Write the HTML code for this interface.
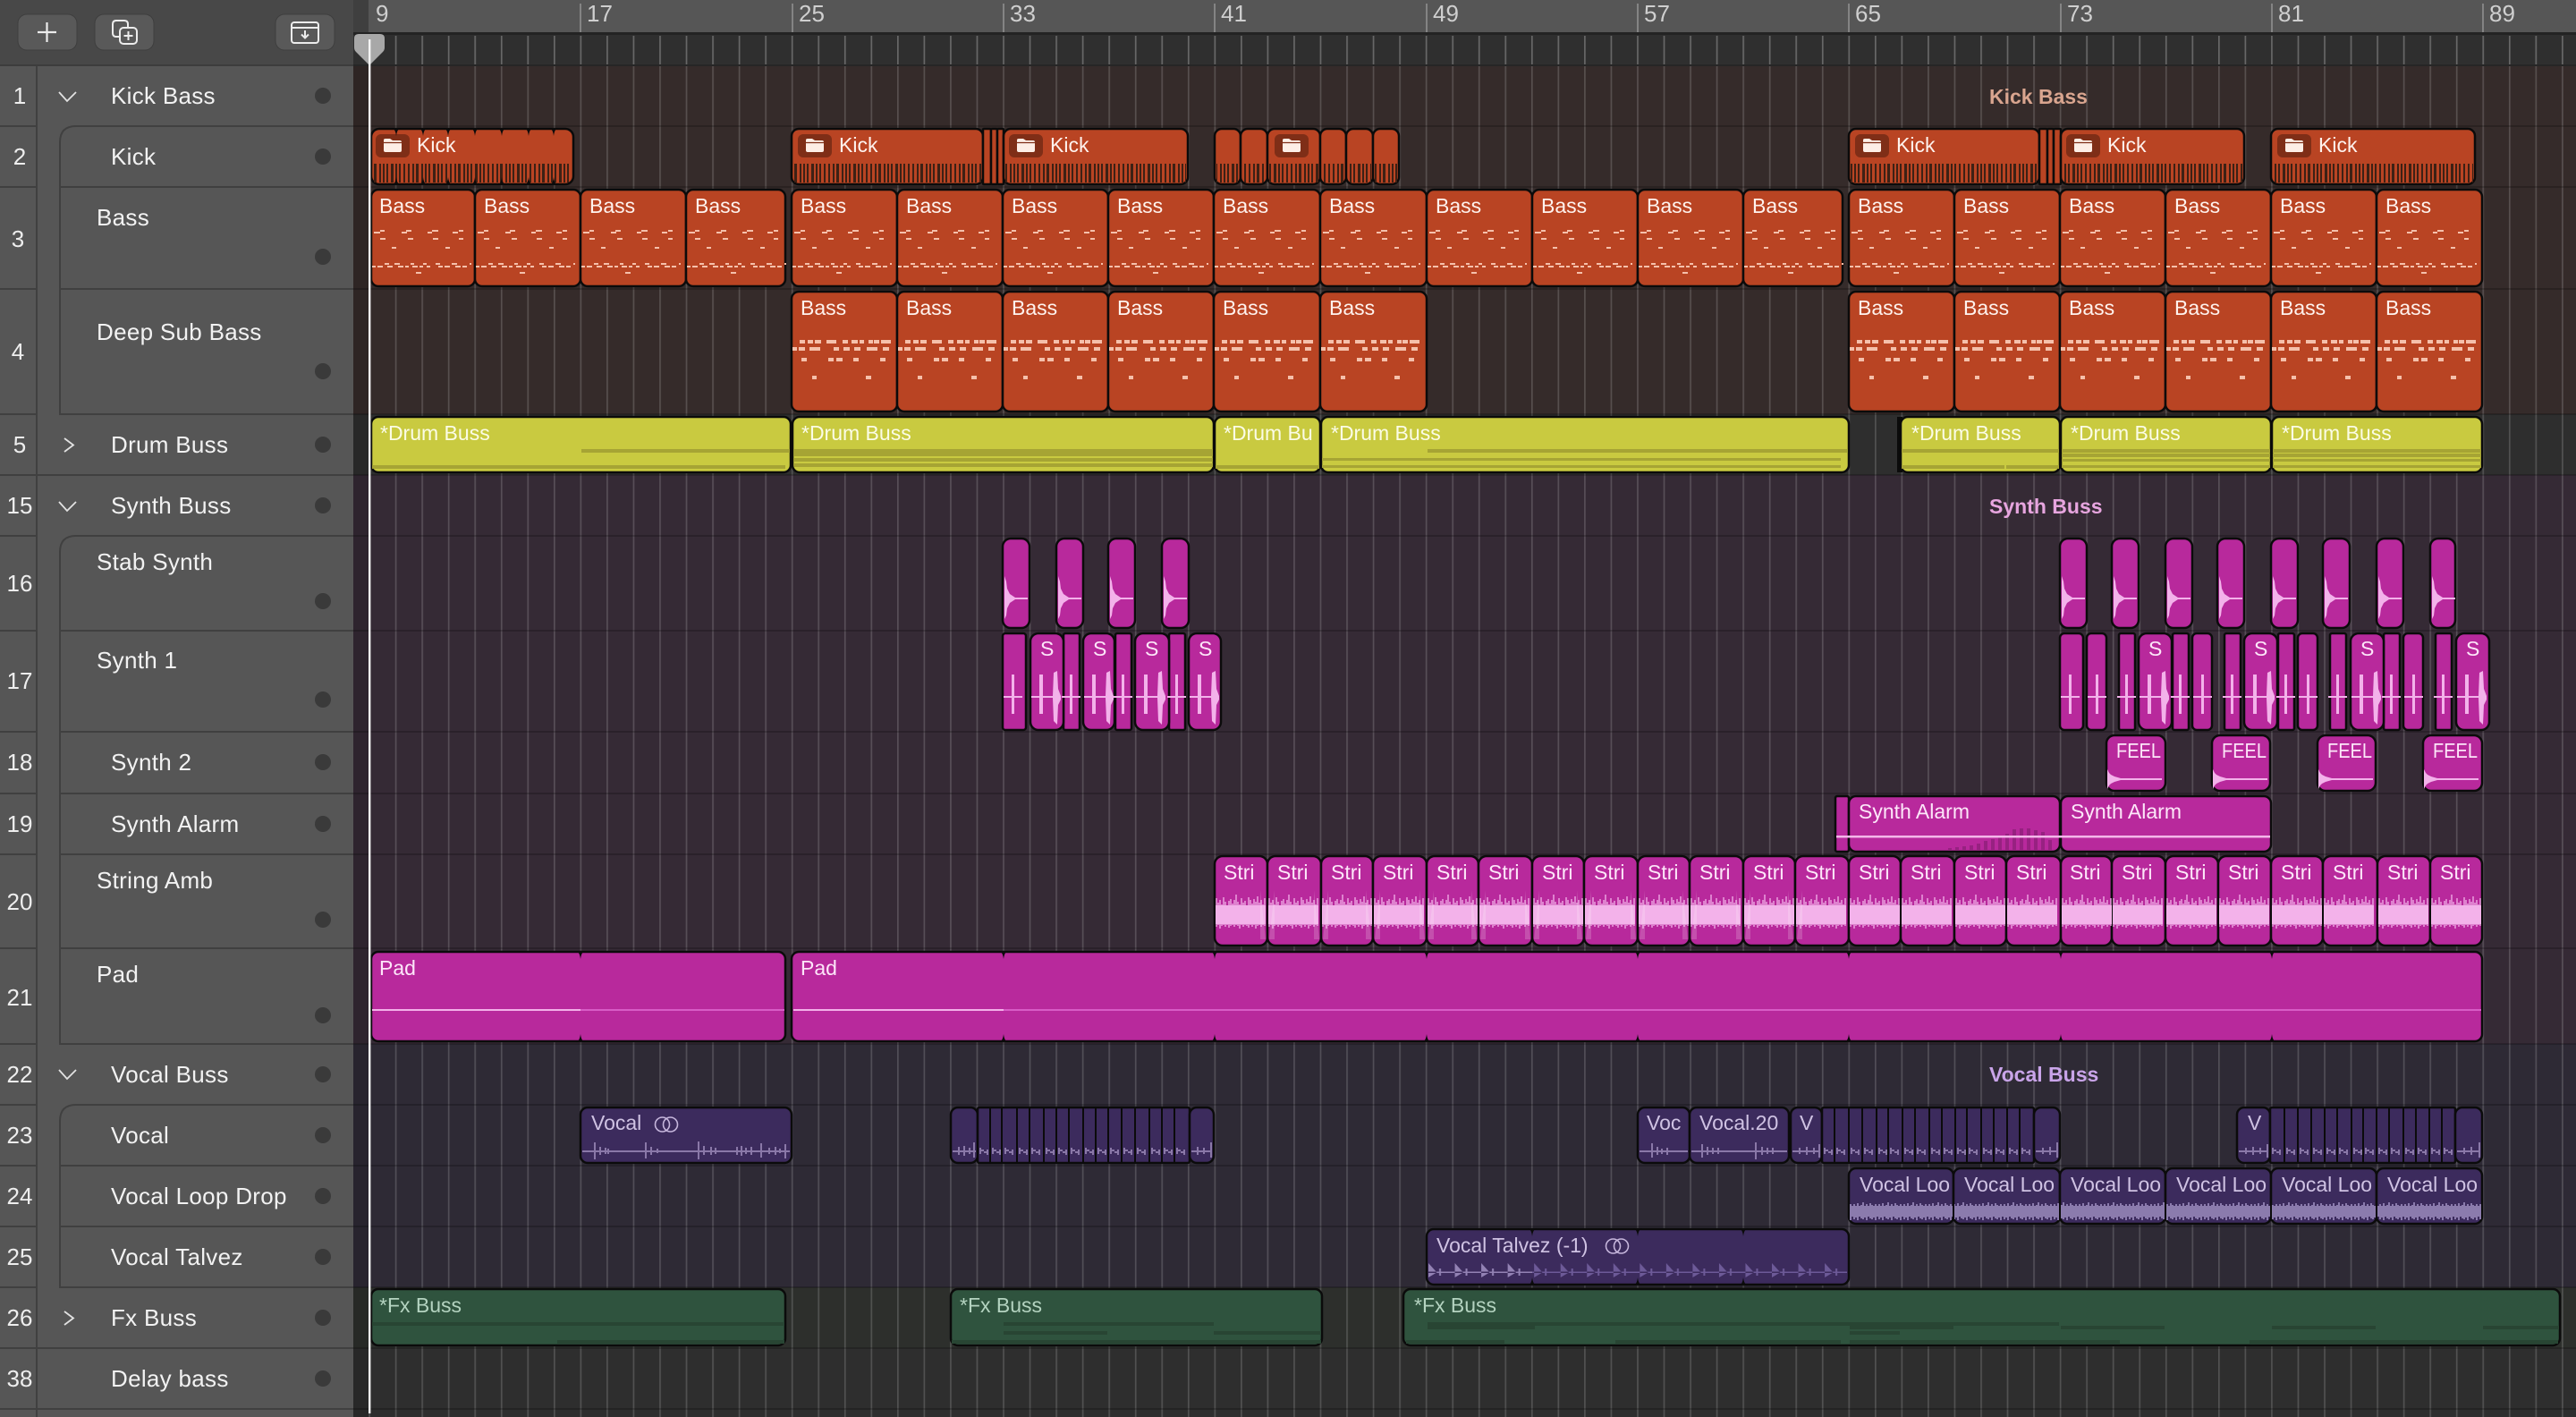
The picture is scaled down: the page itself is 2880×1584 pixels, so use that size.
<!DOCTYPE html>
<html lang="en">
<head>
<meta charset="utf-8">
<title>Arrangement</title>
<style>
html,body{margin:0;padding:0;background:#2e2e2e;width:2880px;height:1584px;overflow:hidden}
svg{display:block;position:absolute;left:0;top:0}
text{font-family:"Liberation Sans",sans-serif;white-space:pre}
.o,.y,.m,.p,.g{stroke:#0b0b0b;stroke-width:2.5}
.o{fill:#b94423}.y{fill:#c9ca40}.m{fill:#b8299c}.p{fill:#3c2b5d}.g{fill:#2f533e}
.to{fill:#fff3ee;font-size:23px}
.ty{fill:#fbfce6;font-size:23px}
.tm{fill:#fde6f9;font-size:23px}
.tp{fill:#cfc2e3;font-size:23px}
.tg{fill:#b4d3c0;font-size:23px}
.n{fill:#eeeeee;font-size:26px;text-anchor:middle}
.l{fill:#f2f2f2;font-size:26px;letter-spacing:.3px}
.r{fill:#cfcfcf;font-size:26px}
.gl{font-size:23px;font-weight:bold}
.d{fill:#3a3a3a}
.ds{fill:#a6a434}.fs{fill:#284533}
</style>
</head>
<body>
<svg width="2880" height="1584" viewBox="0 0 2880 1584" xmlns="http://www.w3.org/2000/svg">
<defs>
<pattern id="gl" patternUnits="userSpaceOnUse" x="412.2" y="0" width="29.54" height="40"><rect width="1.7" height="40" fill="#fff" fill-opacity=".17"/></pattern>
<pattern id="gb" patternUnits="userSpaceOnUse" x="412.2" y="0" width="29.54" height="40"><rect width="1.7" height="40" fill="#fff" fill-opacity=".27"/></pattern>
<pattern id="kp" patternUnits="userSpaceOnUse" x="0" y="183" width="47" height="21"><path fill="#3d2115" d="M1 0h2v21H1zM5 0h2v21H5zM9 0h2v21H9zM14 0h3v21h-3zM19 0h2v21h-2zM23 0h2v21h-2zM28 0h2v21h-2zM33 0h2v21h-2zM38 0h2v21h-2zM42 0h3v21h-3z"/></pattern>
<pattern id="vl" patternUnits="userSpaceOnUse" x="0" y="1340" width="28" height="30"><path stroke="#8b7bad" stroke-width="2" d="M1 6V23M3 8V21M5 5V24M7 9V20M9 7V22M11 4V23M13 8V21M15 6V24M17 9V20M19 5V22M21 7V23M23 8V21M25 6V24M27 9V20"/></pattern>
<pattern id="tb" patternUnits="userSpaceOnUse" x="1597" y="1405" width="29.54" height="30"><path fill="#9382b4" d="M0 7V23L10 17H12V13H14V21H12V18H10ZM0 16.500H29.540V18H0Z"/></pattern>
<pattern id="td" patternUnits="userSpaceOnUse" x="1597" y="1405" width="29.54" height="30"><path fill="#6d5a98" d="M0 7V23L10 17H12V13H14V21H12V18H10ZM0 16.500H29.540V18H0Z"/></pattern>
<path id="nt" d="M-5 -1Q-1 0 0 8Q1 0 5 -1Z" fill="#0b0b0b"/>
<path id="nb" d="M-5 1Q-1 0 0 -8Q1 0 5 1Z" fill="#0b0b0b"/>
<path id="bn" fill="none" stroke="#f5c0ab" stroke-width="2" d="M3 260H10M10 258H15M34 260H40M39 258H45M63 260H68M68 258H75M91 260H97M98 258H103M10 267H16M41 267H47M69 267H75M98 267H103M23 277H28M83 277H88M1 298H5M7 298H13M15 295H20M18 298H24M26 295H32M30 298H36M38 298H42M44 295H48M46 298H52M54 298H58M58 295H62M62 298H66M72 295H77M75 298H80M82 298H88M90 295H96M94 298H100M102 298H107M110 295H112M50 305H56"/>
<path id="sn" fill="none" stroke="#f5c0ab" stroke-width="4" d="M9 382H15M18 382H24M26 382H33M39 382H50M57 382H63M67 382H74M76 382H81M86 382H91M92 382H98M100 382H111M1 390H6M8 390H15M20 390H32M47 390H53M58 390H65M70 390H77M84 390H96M102 390H109M11 402H17M41 402H47M50 402H57M69 402H75M99 402H105M23 422H28M83 422H89"/>
<g id="st"><rect x="1" y="1012" width="56" height="21" fill="#f3b2ea"/><path fill="none" stroke="#f3b2ea" stroke-width="1.300" d="M2 1004V1036M4 1009V1034M6 1006V1038M8 1011V1035M10 1003V1034M12 1008V1036M14 1012V1034M16 1007V1037M18 1005V1035M20 1010V1034M22 1006V1036M24 1000V1034M26 1008V1035M28 1011V1038M30 1004V1034M32 1009V1036M34 1007V1034M36 1012V1035M38 1003V1037M40 1006V1034M42 1010V1036M44 1005V1034M46 1008V1038M48 1002V1035M50 1009V1034M52 1006V1036M54 1011V1034M56 1004V1035"/></g>
<path id="xf" fill="#fff" fill-opacity=".18" d="M-8 1050V995L-2 1050ZM8 1050V995L2 1050Z"/>
<path id="sb" fill="#f3b2ea" d="M2 644L4 650L5 658L8 664L14 668H28V670H14L8 674L5 680L4 688L2 692Z"/>
<path id="s1" fill="#f3b2ea" d="M10 754h3V778H22V780H13V798H10V780H1V778H10Z"/>
<path id="s2" fill="#f3b2ea" d="M10 754h4V778H25L26 752L30 750L31 770L34 778V782L31 788L30 810L26 806L25 780H14V798H10V780H1V778H10Z"/>
<path id="fw" fill="#f3b2ea" d="M1 860L3 864L5 866L9 868L16 870H62V872H16L9 874L5 876L3 878L1 882Z"/>
<path id="sl" fill="none" stroke="#8a78a8" stroke-width="2" d="M2 1283V1290M2 1286H6M6 1288H10M10 1285V1291"/>
<g id="folder"><rect x="0" y="0" width="38" height="26" rx="6" fill="#7f2e17"/><path fill="#fdeee6" d="M9 8V6.500Q9 5 11 5H16L19 7H27Q29 7 29 9V18Q29 20 27 20H11Q9 20 9 18Z"/><path stroke="#7f2e17" stroke-width="1.200" d="M9 9.500H29"/></g>
<g id="link" fill="none" stroke="currentColor" stroke-width="1.600"><circle cx="8.500" cy="0" r="8"/><circle cx="17.500" cy="0" r="8"/></g>
</defs>

<!-- track backgrounds -->
<rect x="395" y="74" width="2485" height="389" fill="#352b2a"/>
<rect x="395" y="463" width="2485" height="68" fill="#2e2e2e"/>
<rect x="395" y="531" width="2485" height="636" fill="#352a35"/>
<rect x="395" y="1167" width="2485" height="272" fill="#2e2a35"/>
<rect x="395" y="1439" width="2485" height="68" fill="#2d2f2c"/>
<rect x="395" y="1507" width="2485" height="77" fill="#2e2e2e"/>
<rect x="412" y="74" width="2468" height="1510" fill="url(#gl)"/>
<path stroke="#000" stroke-opacity=".2" stroke-width="2" d="M395 141H2880M395 209H2880M395 323H2880M395 463H2880M395 531H2880M395 599H2880M395 705H2880M395 818H2880M395 887H2880M395 955H2880M395 1060H2880M395 1167H2880M395 1235H2880M395 1303H2880M395 1371H2880M395 1439H2880M395 1507H2880M395 1575H2880"/>
<rect x="395" y="74" width="17" height="1510" fill="#000" fill-opacity=".12"/>

<!-- ruler -->
<rect x="395" y="0" width="2485" height="36" fill="#565656"/>
<rect x="395" y="0" width="17" height="36" fill="#3f3f3f"/>
<rect x="395" y="36" width="2485" height="38" fill="#2f2f2f"/>
<rect x="395" y="36" width="2485" height="3" fill="#232323"/>
<rect x="395" y="72" width="2485" height="2" fill="#262626"/>
<rect x="412" y="40" width="2468" height="32" fill="url(#gb)"/>
<path stroke="#8c8c8c" stroke-width="1.700" d="M649 4V36M886 4V36M1122 4V36M1358 4V36M1595 4V36M1831 4V36M2067 4V36M2304 4V36M2540 4V36M2776 4V36"/>
<g class="r">
<text class="r" x="420" y="24">9</text>
<text class="r" x="656" y="24">17</text>
<text class="r" x="893" y="24">25</text>
<text class="r" x="1129" y="24">33</text>
<text class="r" x="1365" y="24">41</text>
<text class="r" x="1602" y="24">49</text>
<text class="r" x="1838" y="24">57</text>
<text class="r" x="2074" y="24">65</text>
<text class="r" x="2311" y="24">73</text>
<text class="r" x="2547" y="24">81</text>
<text class="r" x="2783" y="24">89</text>
</g>

<!-- sidebar -->
<rect x="0" y="74" width="395" height="1510" fill="#565656"/>
<rect x="0" y="0" width="395" height="74" fill="#484848"/>
<rect x="0" y="72" width="395" height="2" fill="#3d3d3d"/>
<g fill="#595959" stroke="#3e3e3e" stroke-width="1">
<rect x="20" y="16" width="66" height="40" rx="10"/>
<rect x="106" y="16" width="66" height="40" rx="10"/>
<rect x="308" y="16" width="66" height="40" rx="10"/>
</g>
<path stroke="#ececec" stroke-width="2.200" fill="none" d="M52.500 25V47M42 36H63"/>
<g fill="none" stroke="#ececec" stroke-width="2">
<path d="M134 41H130Q126 41 126 37V27Q126 23 130 23H139Q143 23 143 27V31"/>
<rect x="134" y="31" width="19" height="18" rx="4"/>
<path d="M143.500 35V45M138.500 40H148.500"/>
<rect x="326" y="25" width="30" height="23" rx="3"/>
<path d="M326 31H356M341 34V42M337 38.500L341 42.500L345 38.500"/>
</g>
<path fill="none" stroke="#404040" stroke-width="2" d="M41 74V1584M0 141H41M0 209H41M0 323H41M0 463H41M0 531H395M0 599H41M0 705H41M0 818H41M0 887H41M0 955H41M0 1060H41M0 1167H41M0 1235H41M0 1303H41M0 1371H41M0 1439H41M0 1507H395M0 1575H395M395 141H85Q67 141 67 159V463H395M67 209H395M67 323H395M395 599H85Q67 599 67 617V1167H395M67 705H395M67 818H395M67 887H395M67 955H395M67 1060H395M395 1235H85Q67 1235 67 1253V1439H395M67 1303H395M67 1371H395"/>
<path fill="none" stroke="#e2e2e2" stroke-width="1.800" d="M66 103L75 113L85 103M66 561L75 571L85 561M66 1196L75 1206L85 1196M72 490L82 497.500L72 505M72 1466L82 1473.500L72 1481"/>

<text class="n" x="22" y="116">1</text>
<text class="n" x="22" y="184">2</text>
<text class="n" x="20" y="276">3</text>
<text class="n" x="20" y="402">4</text>
<text class="n" x="22" y="506">5</text>
<text class="n" x="22" y="574">15</text>
<text class="n" x="22" y="661">16</text>
<text class="n" x="22" y="770">17</text>
<text class="n" x="22" y="861">18</text>
<text class="n" x="22" y="930">19</text>
<text class="n" x="22" y="1017">20</text>
<text class="n" x="22" y="1124">21</text>
<text class="n" x="22" y="1210">22</text>
<text class="n" x="22" y="1278">23</text>
<text class="n" x="22" y="1346">24</text>
<text class="n" x="22" y="1414">25</text>
<text class="n" x="22" y="1482">26</text>
<text class="n" x="22" y="1550">38</text>

<text class="l" x="124" y="116">Kick Bass</text>
<text class="l" x="124" y="184">Kick</text>
<text class="l" x="108" y="252">Bass</text>
<text class="l" x="108" y="380">Deep Sub Bass</text>
<text class="l" x="124" y="506">Drum Buss</text>
<text class="l" x="124" y="574">Synth Buss</text>
<text class="l" x="108" y="637">Stab Synth</text>
<text class="l" x="108" y="747">Synth 1</text>
<text class="l" x="124" y="861">Synth 2</text>
<text class="l" x="124" y="930">Synth Alarm</text>
<text class="l" x="108" y="993">String Amb</text>
<text class="l" x="108" y="1098">Pad</text>
<text class="l" x="124" y="1210">Vocal Buss</text>
<text class="l" x="124" y="1278">Vocal</text>
<text class="l" x="124" y="1346">Vocal Loop Drop</text>
<text class="l" x="124" y="1414">Vocal Talvez</text>
<text class="l" x="124" y="1482">Fx Buss</text>
<text class="l" x="124" y="1550">Delay bass</text>

<g class="d">
<ellipse cx="361" cy="107" rx="9" ry="9"/><ellipse cx="361" cy="175" rx="9" ry="9"/><ellipse cx="361" cy="287" rx="9" ry="9"/><ellipse cx="361" cy="415" rx="9" ry="9"/><ellipse cx="361" cy="497" rx="9" ry="9"/><ellipse cx="361" cy="565" rx="9" ry="9"/><ellipse cx="361" cy="672" rx="9" ry="9"/><ellipse cx="361" cy="782" rx="9" ry="9"/><ellipse cx="361" cy="852" rx="9" ry="9"/><ellipse cx="361" cy="921" rx="9" ry="9"/><ellipse cx="361" cy="1028" rx="9" ry="9"/><ellipse cx="361" cy="1135" rx="9" ry="9"/><ellipse cx="361" cy="1201" rx="9" ry="9"/><ellipse cx="361" cy="1269" rx="9" ry="9"/><ellipse cx="361" cy="1337" rx="9" ry="9"/><ellipse cx="361" cy="1405" rx="9" ry="9"/><ellipse cx="361" cy="1473" rx="9" ry="9"/><ellipse cx="361" cy="1541" rx="9" ry="9"/>
</g>

<!-- group labels -->
<text class="gl" x="2224" y="116" fill="#d9a58f">Kick Bass</text>
<text class="gl" x="2224" y="574" fill="#e7a5df">Synth Buss</text>
<text class="gl" x="2224" y="1209" fill="#c9a4e9">Vocal Buss</text>

<!-- Row 2 kick -->
<rect class="o" x="415" y="144" width="226" height="62" rx="9"/>
<rect x="417" y="183" width="222" height="21" fill="url(#kp)"/>
<use href="#folder" x="420" y="150"/><text class="to" x="466" y="170">Kick</text>
<use href="#nt" x="443" y="144"/><use href="#nt" x="473" y="144"/><use href="#nt" x="501" y="144"/><use href="#nt" x="531" y="144"/><use href="#nt" x="561" y="144"/><use href="#nt" x="591" y="144"/><use href="#nt" x="619" y="144"/>
<use href="#nb" x="443" y="206"/><use href="#nb" x="473" y="206"/><use href="#nb" x="501" y="206"/><use href="#nb" x="531" y="206"/><use href="#nb" x="561" y="206"/><use href="#nb" x="591" y="206"/><use href="#nb" x="619" y="206"/>

<rect class="o" x="885" y="144" width="214" height="62" rx="8"/><rect x="887" y="183" width="210" height="21" fill="url(#kp)"/>
<use href="#folder" x="892" y="150"/><text class="to" x="938" y="170">Kick</text>
<rect class="o" x="1099" y="144" width="9" height="62" rx="1"/><rect class="o" x="1108" y="144" width="7" height="62" rx="1"/><rect class="o" x="1115" y="144" width="7" height="62" rx="1"/>
<rect class="o" x="1122" y="144" width="206" height="62" rx="8"/><rect x="1124" y="183" width="202" height="21" fill="url(#kp)"/>
<use href="#folder" x="1128" y="150"/><text class="to" x="1174" y="170">Kick</text>

<rect class="o" x="1358" y="144" width="29" height="62" rx="8"/><rect class="o" x="1387" y="144" width="30" height="62" rx="8"/><rect class="o" x="1417" y="144" width="59" height="62" rx="8"/><rect class="o" x="1476" y="144" width="29" height="62" rx="8"/><rect class="o" x="1505" y="144" width="30" height="62" rx="8"/><rect class="o" x="1535" y="144" width="29" height="62" rx="8"/>
<rect x="1360" y="183" width="25" height="21" fill="url(#kp)"/><rect x="1389" y="183" width="26" height="21" fill="url(#kp)"/><rect x="1419" y="183" width="55" height="21" fill="url(#kp)"/><rect x="1478" y="183" width="25" height="21" fill="url(#kp)"/><rect x="1507" y="183" width="26" height="21" fill="url(#kp)"/><rect x="1537" y="183" width="25" height="21" fill="url(#kp)"/>
<use href="#folder" x="1425" y="150"/>

<rect class="o" x="2067" y="144" width="213" height="62" rx="8"/><rect x="2069" y="183" width="209" height="21" fill="url(#kp)"/>
<use href="#folder" x="2074" y="150"/><text class="to" x="2120" y="170">Kick</text>
<rect class="o" x="2280" y="144" width="9" height="62" rx="1"/><rect class="o" x="2289" y="144" width="7" height="62" rx="1"/><rect class="o" x="2296" y="144" width="8" height="62" rx="1"/>
<rect class="o" x="2304" y="144" width="205" height="62" rx="8"/><rect x="2306" y="183" width="201" height="21" fill="url(#kp)"/>
<use href="#folder" x="2310" y="150"/><text class="to" x="2356" y="170">Kick</text>
<rect class="o" x="2539" y="144" width="228" height="62" rx="8"/><rect x="2541" y="183" width="224" height="21" fill="url(#kp)"/>
<use href="#folder" x="2546" y="150"/><text class="to" x="2592" y="170">Kick</text>

<!-- Row 3 bass -->
<rect class="o" x="415" y="212" width="116" height="108" rx="8"/><rect class="o" x="531" y="212" width="118" height="108" rx="8"/><rect class="o" x="649" y="212" width="118" height="108" rx="8"/><rect class="o" x="767" y="212" width="111" height="108" rx="8"/>
<rect class="o" x="885" y="212" width="118" height="108" rx="8"/><rect class="o" x="1003" y="212" width="118" height="108" rx="8"/><rect class="o" x="1121" y="212" width="118" height="108" rx="8"/><rect class="o" x="1239" y="212" width="118" height="108" rx="8"/><rect class="o" x="1357" y="212" width="119" height="108" rx="8"/><rect class="o" x="1476" y="212" width="119" height="108" rx="8"/><rect class="o" x="1595" y="212" width="118" height="108" rx="8"/><rect class="o" x="1713" y="212" width="118" height="108" rx="8"/><rect class="o" x="1831" y="212" width="118" height="108" rx="8"/><rect class="o" x="1949" y="212" width="111" height="108" rx="8"/>
<rect class="o" x="2067" y="212" width="118" height="108" rx="8"/><rect class="o" x="2185" y="212" width="118" height="108" rx="8"/><rect class="o" x="2303" y="212" width="118" height="108" rx="8"/><rect class="o" x="2421" y="212" width="118" height="108" rx="8"/><rect class="o" x="2539" y="212" width="118" height="108" rx="8"/><rect class="o" x="2657" y="212" width="118" height="108" rx="8"/>
<use href="#bn" x="415"/><use href="#bn" x="531"/><use href="#bn" x="649"/><use href="#bn" x="767"/><use href="#bn" x="885"/><use href="#bn" x="1003"/><use href="#bn" x="1121"/><use href="#bn" x="1239"/><use href="#bn" x="1357"/><use href="#bn" x="1476"/><use href="#bn" x="1595"/><use href="#bn" x="1713"/><use href="#bn" x="1831"/><use href="#bn" x="1949"/><use href="#bn" x="2067"/><use href="#bn" x="2185"/><use href="#bn" x="2303"/><use href="#bn" x="2421"/><use href="#bn" x="2539"/><use href="#bn" x="2657"/>
<text class="to" x="424" y="238">Bass</text><text class="to" x="541" y="238">Bass</text><text class="to" x="659" y="238">Bass</text><text class="to" x="777" y="238">Bass</text><text class="to" x="895" y="238">Bass</text><text class="to" x="1013" y="238">Bass</text><text class="to" x="1131" y="238">Bass</text><text class="to" x="1249" y="238">Bass</text><text class="to" x="1367" y="238">Bass</text><text class="to" x="1486" y="238">Bass</text><text class="to" x="1605" y="238">Bass</text><text class="to" x="1723" y="238">Bass</text><text class="to" x="1841" y="238">Bass</text><text class="to" x="1959" y="238">Bass</text><text class="to" x="2077" y="238">Bass</text><text class="to" x="2195" y="238">Bass</text><text class="to" x="2313" y="238">Bass</text><text class="to" x="2431" y="238">Bass</text><text class="to" x="2549" y="238">Bass</text><text class="to" x="2667" y="238">Bass</text>

<!-- Row 4 deep sub bass -->
<rect class="o" x="885" y="326" width="118" height="134" rx="8"/><rect class="o" x="1003" y="326" width="118" height="134" rx="8"/><rect class="o" x="1121" y="326" width="118" height="134" rx="8"/><rect class="o" x="1239" y="326" width="118" height="134" rx="8"/><rect class="o" x="1357" y="326" width="119" height="134" rx="8"/><rect class="o" x="1476" y="326" width="119" height="134" rx="8"/>
<rect class="o" x="2067" y="326" width="118" height="134" rx="8"/><rect class="o" x="2185" y="326" width="118" height="134" rx="8"/><rect class="o" x="2303" y="326" width="118" height="134" rx="8"/><rect class="o" x="2421" y="326" width="118" height="134" rx="8"/><rect class="o" x="2539" y="326" width="118" height="134" rx="8"/><rect class="o" x="2657" y="326" width="118" height="134" rx="8"/>
<use href="#sn" x="885"/><use href="#sn" x="1003"/><use href="#sn" x="1121"/><use href="#sn" x="1239"/><use href="#sn" x="1357"/><use href="#sn" x="1476"/><use href="#sn" x="2067"/><use href="#sn" x="2185"/><use href="#sn" x="2303"/><use href="#sn" x="2421"/><use href="#sn" x="2539"/><use href="#sn" x="2657"/>
<text class="to" x="895" y="352">Bass</text><text class="to" x="1013" y="352">Bass</text><text class="to" x="1131" y="352">Bass</text><text class="to" x="1249" y="352">Bass</text><text class="to" x="1367" y="352">Bass</text><text class="to" x="1486" y="352">Bass</text><text class="to" x="2077" y="352">Bass</text><text class="to" x="2195" y="352">Bass</text><text class="to" x="2313" y="352">Bass</text><text class="to" x="2431" y="352">Bass</text><text class="to" x="2549" y="352">Bass</text><text class="to" x="2667" y="352">Bass</text>

<!-- Row 5 drum buss -->
<rect class="y" x="415" y="466" width="469" height="62" rx="8"/><rect class="y" x="886" y="466" width="471" height="62" rx="8"/><rect class="y" x="1358" y="466" width="118" height="62" rx="8"/><rect class="y" x="1477" y="466" width="590" height="62" rx="8"/>
<rect x="2121" y="466" width="6" height="62" fill="#0b0b0b"/><rect class="y" x="2125" y="466" width="178" height="62" rx="8"/><rect class="y" x="2304" y="466" width="235" height="62" rx="8"/><rect class="y" x="2540" y="466" width="235" height="62" rx="8"/>
<g class="ds">
<rect x="650" y="502" width="233" height="4"/><rect x="416" y="520" width="462" height="4"/>
<rect x="888" y="502" width="468" height="8"/><rect x="888" y="512" width="468" height="4"/><rect x="888" y="518" width="468" height="4"/>
<rect x="1359" y="520" width="116" height="4"/>
<rect x="1596" y="502" width="469" height="4"/><rect x="1478" y="512" width="580" height="3"/><rect x="1478" y="520" width="580" height="3"/>
<rect x="2126" y="502" width="176" height="4"/><rect x="2126" y="520" width="115" height="4"/><rect x="2243" y="520" width="59" height="4"/>
<rect x="2305" y="502" width="233" height="4"/><rect x="2305" y="507" width="233" height="4"/><rect x="2305" y="513" width="233" height="3"/><rect x="2305" y="520" width="233" height="3"/>
<rect x="2541" y="502" width="233" height="4"/><rect x="2541" y="507" width="233" height="4"/><rect x="2541" y="513" width="233" height="3"/><rect x="2541" y="520" width="233" height="3"/>
</g>
<text class="ty" x="425" y="492">*Drum Buss</text><text class="ty" x="896" y="492">*Drum Buss</text><text class="ty" x="1368" y="492">*Drum Bu</text><text class="ty" x="1488" y="492">*Drum Buss</text><text class="ty" x="2137" y="492">*Drum Buss</text><text class="ty" x="2315" y="492">*Drum Buss</text><text class="ty" x="2551" y="492">*Drum Buss</text>

<!-- Row 16 stab -->
<rect class="m" x="1121" y="602" width="30" height="100" rx="9"/><rect class="m" x="1181" y="602" width="30" height="100" rx="9"/><rect class="m" x="1239" y="602" width="30" height="100" rx="9"/><rect class="m" x="1299" y="602" width="30" height="100" rx="9"/>
<rect class="m" x="2303" y="602" width="30" height="100" rx="9"/><rect class="m" x="2361" y="602" width="30" height="100" rx="9"/><rect class="m" x="2421" y="602" width="30" height="100" rx="9"/><rect class="m" x="2479" y="602" width="30" height="100" rx="9"/><rect class="m" x="2539" y="602" width="30" height="100" rx="9"/><rect class="m" x="2597" y="602" width="30" height="100" rx="9"/><rect class="m" x="2657" y="602" width="30" height="100" rx="9"/><rect class="m" x="2717" y="602" width="28" height="100" rx="9"/>
<use href="#sb" x="1121"/><use href="#sb" x="1181"/><use href="#sb" x="1239"/><use href="#sb" x="1299"/><use href="#sb" x="2303"/><use href="#sb" x="2361"/><use href="#sb" x="2421"/><use href="#sb" x="2479"/><use href="#sb" x="2539"/><use href="#sb" x="2597"/><use href="#sb" x="2657"/><use href="#sb" x="2717"/>

<!-- Row 17 synth 1 -->
<rect class="m" x="1121" y="708" width="26" height="108" rx="3"/><rect class="m" x="1189" y="708" width="18" height="108" rx="2"/><rect class="m" x="1247" y="708" width="18" height="108" rx="2"/><rect class="m" x="1307" y="708" width="18" height="108" rx="2"/>
<rect class="m" x="1152" y="708" width="37" height="108" rx="9"/><rect class="m" x="1211" y="708" width="35" height="108" rx="9"/><rect class="m" x="1269" y="708" width="38" height="108" rx="9"/><rect class="m" x="1329" y="708" width="36" height="108" rx="9"/>
<rect class="m" x="2303" y="708" width="26" height="108" rx="5"/><rect class="m" x="2333" y="708" width="22" height="108" rx="5"/><rect class="m" x="2369" y="708" width="18" height="108" rx="2"/><rect class="m" x="2429" y="708" width="18" height="108" rx="2"/><rect class="m" x="2451" y="708" width="22" height="108" rx="5"/><rect class="m" x="2487" y="708" width="18" height="108" rx="2"/><rect class="m" x="2547" y="708" width="18" height="108" rx="2"/><rect class="m" x="2569" y="708" width="22" height="108" rx="5"/><rect class="m" x="2605" y="708" width="18" height="108" rx="2"/><rect class="m" x="2665" y="708" width="18" height="108" rx="2"/><rect class="m" x="2687" y="708" width="22" height="108" rx="5"/><rect class="m" x="2723" y="708" width="18" height="108" rx="2"/>
<rect class="m" x="2391" y="708" width="37" height="108" rx="9"/><rect class="m" x="2509" y="708" width="37" height="108" rx="9"/><rect class="m" x="2628" y="708" width="37" height="108" rx="9"/><rect class="m" x="2746" y="708" width="37" height="108" rx="9"/>
<use href="#s1" x="1121"/><use href="#s1" x="1186"/><use href="#s1" x="1244"/><use href="#s1" x="1304"/><use href="#s2" x="1152"/><use href="#s2" x="1211"/><use href="#s2" x="1269"/><use href="#s2" x="1329"/>
<use href="#s1" x="2303"/><use href="#s1" x="2333"/><use href="#s1" x="2366"/><use href="#s1" x="2426"/><use href="#s1" x="2451"/><use href="#s1" x="2484"/><use href="#s1" x="2544"/><use href="#s1" x="2569"/><use href="#s1" x="2602"/><use href="#s1" x="2662"/><use href="#s1" x="2687"/><use href="#s1" x="2720"/>
<use href="#s2" x="2391"/><use href="#s2" x="2509"/><use href="#s2" x="2628"/><use href="#s2" x="2746"/>
<text class="tm" x="1163" y="733">S</text><text class="tm" x="1222" y="733">S</text><text class="tm" x="1280" y="733">S</text><text class="tm" x="1340" y="733">S</text><text class="tm" x="2402" y="733">S</text><text class="tm" x="2520" y="733">S</text><text class="tm" x="2639" y="733">S</text><text class="tm" x="2757" y="733">S</text>

<!-- Row 18 feel -->
<rect class="m" x="2355" y="822" width="66" height="62" rx="9"/><rect class="m" x="2473" y="822" width="65" height="62" rx="9"/><rect class="m" x="2591" y="822" width="65" height="62" rx="9"/><rect class="m" x="2709" y="822" width="66" height="62" rx="9"/>
<use href="#fw" x="2355"/><use href="#fw" x="2473"/><use href="#fw" x="2591"/><use href="#fw" x="2709"/>
<text class="tm" x="2366" y="847" textLength="50" lengthAdjust="spacingAndGlyphs">FEEL</text><text class="tm" x="2484" y="847" textLength="50" lengthAdjust="spacingAndGlyphs">FEEL</text><text class="tm" x="2602" y="847" textLength="50" lengthAdjust="spacingAndGlyphs">FEEL</text><text class="tm" x="2720" y="847" textLength="50" lengthAdjust="spacingAndGlyphs">FEEL</text>

<!-- Row 19 alarm -->
<rect class="m" x="2052" y="890" width="15" height="62" rx="2"/><rect class="m" x="2067" y="890" width="236" height="62" rx="8"/><rect class="m" x="2304" y="890" width="235" height="62" rx="8"/>
<path fill="#8c1f78" fill-opacity=".75" d="M2178 948h4v2h-4zM2186 947h4v3h-4zM2194 946h4v4h-4zM2202 945h4v5h-4zM2210 943h4v7h-4zM2218 940h4v10h-4zM2226 938h4v12h-4zM2234 935h4v15h-4zM2242 932h4v18h-4zM2250 927h4v23h-4zM2258 926h4v24h-4zM2266 926h4v24h-4zM2274 928h4v22h-4zM2282 930h4v20h-4zM2290 939h4v11h-4z"/>
<rect x="2053" y="934" width="485" height="2.500" fill="#f4b6ea"/>
<text class="tm" x="2078" y="915">Synth Alarm</text><text class="tm" x="2315" y="915">Synth Alarm</text>

<!-- Row 20 strings -->
<rect class="m" x="1358" y="957" width="59" height="100" rx="9"/><rect class="m" x="1417" y="957" width="60" height="100" rx="9"/><rect class="m" x="1477" y="957" width="58" height="100" rx="9"/><rect class="m" x="1535" y="957" width="60" height="100" rx="9"/><rect class="m" x="1595" y="957" width="58" height="100" rx="9"/><rect class="m" x="1653" y="957" width="60" height="100" rx="9"/><rect class="m" x="1713" y="957" width="58" height="100" rx="9"/><rect class="m" x="1771" y="957" width="60" height="100" rx="9"/><rect class="m" x="1831" y="957" width="58" height="100" rx="9"/><rect class="m" x="1889" y="957" width="60" height="100" rx="9"/><rect class="m" x="1949" y="957" width="58" height="100" rx="9"/><rect class="m" x="2007" y="957" width="60" height="100" rx="9"/><rect class="m" x="2067" y="957" width="58" height="100" rx="9"/><rect class="m" x="2125" y="957" width="60" height="100" rx="9"/><rect class="m" x="2185" y="957" width="58" height="100" rx="9"/><rect class="m" x="2243" y="957" width="61" height="100" rx="9"/><rect class="m" x="2304" y="957" width="57" height="100" rx="9"/><rect class="m" x="2361" y="957" width="60" height="100" rx="9"/><rect class="m" x="2421" y="957" width="59" height="100" rx="9"/><rect class="m" x="2480" y="957" width="59" height="100" rx="9"/><rect class="m" x="2539" y="957" width="58" height="100" rx="9"/><rect class="m" x="2597" y="957" width="61" height="100" rx="9"/><rect class="m" x="2658" y="957" width="59" height="100" rx="9"/><rect class="m" x="2717" y="957" width="58" height="100" rx="9"/>
<use href="#st" x="1358"/><use href="#st" x="1417"/><use href="#st" x="1477"/><use href="#st" x="1535"/><use href="#st" x="1595"/><use href="#st" x="1653"/><use href="#st" x="1713"/><use href="#st" x="1771"/><use href="#st" x="1831"/><use href="#st" x="1889"/><use href="#st" x="1949"/><use href="#st" x="2007"/><use href="#st" x="2067"/><use href="#st" x="2125"/><use href="#st" x="2185"/><use href="#st" x="2243"/><use href="#st" x="2304"/><use href="#st" x="2361"/><use href="#st" x="2421"/><use href="#st" x="2480"/><use href="#st" x="2539"/><use href="#st" x="2597"/><use href="#st" x="2658"/><use href="#st" x="2717"/>
<use href="#xf" x="1417"/><use href="#xf" x="1477"/><use href="#xf" x="1535"/><use href="#xf" x="1595"/><use href="#xf" x="1653"/><use href="#xf" x="1713"/><use href="#xf" x="1771"/><use href="#xf" x="1831"/><use href="#xf" x="1889"/><use href="#xf" x="1949"/><use href="#xf" x="2007"/>
<text class="tm" x="1368" y="983">Stri</text><text class="tm" x="1428" y="983">Stri</text><text class="tm" x="1488" y="983">Stri</text><text class="tm" x="1546" y="983">Stri</text><text class="tm" x="1606" y="983">Stri</text><text class="tm" x="1664" y="983">Stri</text><text class="tm" x="1724" y="983">Stri</text><text class="tm" x="1782" y="983">Stri</text><text class="tm" x="1842" y="983">Stri</text><text class="tm" x="1900" y="983">Stri</text><text class="tm" x="1960" y="983">Stri</text><text class="tm" x="2018" y="983">Stri</text><text class="tm" x="2078" y="983">Stri</text><text class="tm" x="2136" y="983">Stri</text><text class="tm" x="2196" y="983">Stri</text><text class="tm" x="2254" y="983">Stri</text><text class="tm" x="2314" y="983">Stri</text><text class="tm" x="2372" y="983">Stri</text><text class="tm" x="2432" y="983">Stri</text><text class="tm" x="2491" y="983">Stri</text><text class="tm" x="2550" y="983">Stri</text><text class="tm" x="2608" y="983">Stri</text><text class="tm" x="2669" y="983">Stri</text><text class="tm" x="2728" y="983">Stri</text>

<!-- Row 21 pad -->
<rect class="m" x="415" y="1064" width="463" height="100" rx="8"/><rect class="m" x="885" y="1064" width="1890" height="100" rx="8"/>
<rect x="416" y="1128" width="233" height="2" fill="#f3b0e9"/><rect x="649" y="1128" width="228" height="2" fill="#d85cc6"/>
<rect x="887" y="1128" width="235" height="2" fill="#f3b0e9"/><rect x="1122" y="1128" width="1652" height="2" fill="#d85cc6"/>
<use href="#nt" x="649" y="1064"/><use href="#nb" x="649" y="1164"/><use href="#nt" x="1122" y="1064"/><use href="#nb" x="1122" y="1164"/><use href="#nt" x="1358" y="1064"/><use href="#nb" x="1358" y="1164"/><use href="#nt" x="1595" y="1064"/><use href="#nb" x="1595" y="1164"/><use href="#nt" x="1831" y="1064"/><use href="#nb" x="1831" y="1164"/><use href="#nt" x="2067" y="1064"/><use href="#nb" x="2067" y="1164"/><use href="#nt" x="2304" y="1064"/><use href="#nb" x="2304" y="1164"/><use href="#nt" x="2540" y="1064"/><use href="#nb" x="2540" y="1164"/>
<text class="tm" x="424" y="1090">Pad</text><text class="tm" x="895" y="1090">Pad</text>

<!-- Row 23 vocal -->
<rect class="p" x="649" y="1238" width="236" height="62" rx="8"/>
<path fill="none" stroke="#8a78a8" stroke-width="2" d="M651 1287H883M665 1277V1296M671 1282V1291M677 1283V1290M680 1284V1290M722 1277V1295M728 1282V1291M735 1284V1289M781 1276V1296M787 1281V1291M795 1282V1291M800 1283V1290M824 1282V1291M829 1281V1292M834 1283V1290M840 1282V1291M851 1278V1294M860 1283V1290M867 1282V1291M872 1284V1289M878 1279V1295"/>
<text class="tp" x="661" y="1263">Vocal</text><use href="#link" x="732" y="1257" color="#c6b6dc"/>

<rect class="p" x="1063" y="1238" width="30" height="62" rx="8"/><rect class="p" x="1093" y="1238" width="237" height="62" rx="2"/><rect class="p" x="1330" y="1238" width="27" height="62" rx="8"/>
<path stroke="#0b0b0b" stroke-width="2" d="M1107 1238V1300M1120 1238V1300M1137 1238V1300M1151 1238V1300M1167 1238V1300M1181 1238V1300M1195 1238V1300M1211 1238V1300M1225 1238V1300M1239 1238V1300M1254 1238V1300M1269 1238V1300M1285 1238V1300M1299 1238V1300M1313 1238V1300"/>
<path fill="none" stroke="#8a78a8" stroke-width="2" d="M1065 1287H1091M1072 1282V1291M1078 1281V1292M1084 1283V1290M1089 1277V1294M1332 1287H1355M1339 1282V1291M1346 1283V1290M1354 1277V1294"/>
<use href="#sl" x="1094"/><use href="#sl" x="1108"/><use href="#sl" x="1122"/><use href="#sl" x="1138"/><use href="#sl" x="1152"/><use href="#sl" x="1168"/><use href="#sl" x="1182"/><use href="#sl" x="1196"/><use href="#sl" x="1212"/><use href="#sl" x="1226"/><use href="#sl" x="1240"/><use href="#sl" x="1255"/><use href="#sl" x="1270"/><use href="#sl" x="1286"/><use href="#sl" x="1300"/><use href="#sl" x="1314"/>

<rect class="p" x="1831" y="1238" width="58" height="62" rx="8"/><rect class="p" x="1889" y="1238" width="111" height="62" rx="8"/><rect class="p" x="2002" y="1238" width="35" height="62" rx="8"/><rect class="p" x="2037" y="1238" width="237" height="62" rx="2"/><rect class="p" x="2274" y="1238" width="29" height="62" rx="8"/>
<path stroke="#0b0b0b" stroke-width="2" d="M2051 1238V1300M2067 1238V1300M2082 1238V1300M2098 1238V1300M2111 1238V1300M2127 1238V1300M2141 1238V1300M2157 1238V1300M2171 1238V1300M2186 1238V1300M2199 1238V1300M2215 1238V1300M2229 1238V1300M2244 1238V1300M2258 1238V1300"/>
<path fill="none" stroke="#8a78a8" stroke-width="2" d="M1833 1287H1887M1847 1278V1294M1853 1282V1291M1858 1284V1290M1864 1283V1291M1891 1287H1998M1903 1279V1294M1909 1282V1291M1915 1283V1290M1921 1283V1290M1963 1277V1296M1970 1282V1291M1976 1283V1290M1982 1283V1290M2004 1287H2035M2012 1283V1290M2020 1282V1291M2028 1283V1290M2034 1279V1294M2276 1287H2301M2284 1283V1290M2292 1282V1291M2300 1277V1294"/>
<use href="#sl" x="2038"/><use href="#sl" x="2052"/><use href="#sl" x="2068"/><use href="#sl" x="2083"/><use href="#sl" x="2099"/><use href="#sl" x="2112"/><use href="#sl" x="2128"/><use href="#sl" x="2142"/><use href="#sl" x="2158"/><use href="#sl" x="2172"/><use href="#sl" x="2187"/><use href="#sl" x="2200"/><use href="#sl" x="2216"/><use href="#sl" x="2230"/><use href="#sl" x="2245"/><use href="#sl" x="2259"/>
<text class="tp" x="1841" y="1263">Voc</text><text class="tp" x="1900" y="1263">Vocal.20</text><text class="tp" x="2012" y="1263">V</text>

<rect class="p" x="2501" y="1238" width="37" height="62" rx="8"/><rect class="p" x="2538" y="1238" width="207" height="62" rx="2"/><rect class="p" x="2745" y="1238" width="30" height="62" rx="8"/>
<path stroke="#0b0b0b" stroke-width="2" d="M2554 1238V1300M2569 1238V1300M2584 1238V1300M2599 1238V1300M2613 1238V1300M2629 1238V1300M2642 1238V1300M2657 1238V1300M2671 1238V1300M2687 1238V1300M2701 1238V1300M2716 1238V1300M2730 1238V1300"/>
<path fill="none" stroke="#8a78a8" stroke-width="2" d="M2503 1287H2536M2511 1283V1290M2519 1282V1291M2527 1283V1290M2535 1279V1294M2747 1287H2773M2755 1283V1290M2763 1282V1291M2772 1277V1294"/>
<use href="#sl" x="2539"/><use href="#sl" x="2555"/><use href="#sl" x="2570"/><use href="#sl" x="2585"/><use href="#sl" x="2600"/><use href="#sl" x="2614"/><use href="#sl" x="2630"/><use href="#sl" x="2643"/><use href="#sl" x="2658"/><use href="#sl" x="2672"/><use href="#sl" x="2688"/><use href="#sl" x="2702"/><use href="#sl" x="2717"/><use href="#sl" x="2731"/>
<text class="tp" x="2513" y="1263">V</text>

<!-- Row 24 vocal loop -->
<rect class="p" x="2067" y="1306" width="117" height="62" rx="8"/><rect class="p" x="2184" y="1306" width="119" height="62" rx="8"/><rect class="p" x="2303" y="1306" width="118" height="62" rx="8"/><rect class="p" x="2421" y="1306" width="118" height="62" rx="8"/><rect class="p" x="2539" y="1306" width="118" height="62" rx="8"/><rect class="p" x="2657" y="1306" width="118" height="62" rx="8"/>
<g fill="#8b7bad"><rect x="2068" y="1348" width="115" height="12"/><rect x="2185" y="1348" width="117" height="12"/><rect x="2304" y="1348" width="116" height="12"/><rect x="2422" y="1348" width="116" height="12"/><rect x="2540" y="1348" width="116" height="12"/><rect x="2658" y="1348" width="116" height="12"/></g>
<g fill="url(#vl)"><rect x="2068" y="1343" width="115" height="22"/><rect x="2185" y="1343" width="117" height="22"/><rect x="2304" y="1343" width="116" height="22"/><rect x="2422" y="1343" width="116" height="22"/><rect x="2540" y="1343" width="116" height="22"/><rect x="2658" y="1343" width="116" height="22"/></g>
<text class="tp" x="2079" y="1332">Vocal Loo</text><text class="tp" x="2196" y="1332">Vocal Loo</text><text class="tp" x="2315" y="1332">Vocal Loo</text><text class="tp" x="2433" y="1332">Vocal Loo</text><text class="tp" x="2551" y="1332">Vocal Loo</text><text class="tp" x="2669" y="1332">Vocal Loo</text>

<!-- Row 25 talvez -->
<rect class="p" x="1595" y="1374" width="472" height="62" rx="8"/>
<rect x="1597" y="1405" width="116" height="30" fill="url(#tb)"/><rect x="1713" y="1405" width="352" height="30" fill="url(#td)"/>
<use href="#nt" x="1713" y="1374"/><use href="#nb" x="1713" y="1436"/><use href="#nt" x="1831" y="1374"/><use href="#nb" x="1831" y="1436"/><use href="#nt" x="1949" y="1374"/><use href="#nb" x="1949" y="1436"/>
<text class="tp" x="1606" y="1400">Vocal Talvez (-1)</text><use href="#link" x="1795" y="1393" color="#c6b6dc"/>

<!-- Row 26 fx -->
<rect class="g" x="415" y="1441" width="463" height="63" rx="8"/><rect class="g" x="1063" y="1441" width="415" height="63" rx="8"/><rect class="g" x="1569" y="1441" width="1293" height="63" rx="8"/>
<g class="fs">
<rect x="416" y="1478" width="461" height="4"/><rect x="623" y="1498" width="254" height="4"/>
<rect x="1122" y="1478" width="235" height="4"/><rect x="1122" y="1488" width="116" height="4"/><rect x="1357" y="1488" width="120" height="4"/><rect x="1064" y="1498" width="413" height="4"/>
<rect x="1596" y="1478" width="120" height="8"/><rect x="1716" y="1478" width="586" height="4"/><rect x="2068" y="1482" width="116" height="4"/><rect x="2304" y="1482" width="116" height="4"/><rect x="2540" y="1482" width="116" height="4"/><rect x="2776" y="1482" width="85" height="4"/><rect x="2068" y="1488" width="56" height="4"/>
<rect x="1572" y="1498" width="110" height="4"/><rect x="1806" y="1498" width="252" height="4"/><rect x="2068" y="1498" width="302" height="4"/><rect x="2515" y="1498" width="345" height="4"/>
</g>
<text class="tg" x="424" y="1467">*Fx Buss</text><text class="tg" x="1073" y="1467">*Fx Buss</text><text class="tg" x="1581" y="1467">*Fx Buss</text>

<!-- playhead -->
<rect x="412" y="60" width="2.400" height="1520" fill="#f5f5f5"/>
<path d="M396 43Q396 38 401 38H425Q430 38 430 43V53Q430 56 428 58L414 72H412L398 58Q396 56 396 53Z" fill="#a8a8a8"/>
<rect x="412" y="44" width="2.400" height="28" fill="#f5f5f5"/>
</svg>
</body>
</html>
